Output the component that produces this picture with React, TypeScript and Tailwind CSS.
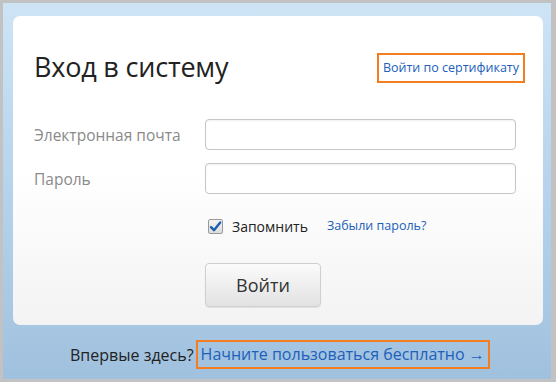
import React from "react";

function CheckMark() {
  return (
    <span className="flex h-[15px] w-[15px] items-center justify-center rounded-[2px] border border-[#9a9a9a] bg-gradient-to-b from-[#f4f4f4] to-[#dcdcdc]">
      <svg width="13" height="13" viewBox="0 0 13 13">
        <path d="M2 7.2 L5 10.2 L11.2 2.4" fill="none" stroke="#1f5fb0" strokeWidth="2.4" strokeLinecap="round" strokeLinejoin="round" />
      </svg>
    </span>
  );
}

export default function App() {
  const font = { fontFamily: '"Open Sans", "Noto Sans", sans-serif' };

  return (
    <div className="h-[385px] w-[556px] bg-white" style={font}>
      <div className="flex h-[382px] w-[556px] flex-col border-[3px] border-r-[5px] border-[#c2c2c2] bg-gradient-to-b from-[#cde4f5] via-[#b5d3ec] to-[#a0c1de] pl-[10px] pr-[8px] pt-[13px]">
        {/* card */}
        <div className="flex h-[309px] flex-col rounded-[7px] bg-gradient-to-b from-white via-white to-[#f3f3f3] px-[21px] pt-[32px]">
          <div className="flex items-center justify-between">
            <h1 className="text-[27px] leading-[38px] tracking-[-0.2px] text-[#222]">Вход в систему</h1>
            <a className="mr-[-3px] mt-[2px] border-2 border-[#f47d20] px-[4px] py-[4px] text-[12.5px] leading-[18px] text-[#2060bb]">
              Войти по сертификату
            </a>
          </div>

          <div className="mt-[33px] flex flex-col gap-[13px]">
            <div className="flex items-center">
              <span className="mt-[3px] w-[171px] text-[15.5px] text-[#8a8a8a]">Электронная почта</span>
              <div className="h-[31px] w-[311px] rounded-[4px] border border-[#c6c6c6] bg-white shadow-[inset_0_1px_2px_rgba(0,0,0,0.06)]" />
            </div>
            <div className="flex items-center">
              <span className="mt-[3px] w-[171px] text-[15.5px] text-[#8a8a8a]">Пароль</span>
              <div className="h-[31px] w-[311px] rounded-[4px] border border-[#c6c6c6] bg-white shadow-[inset_0_1px_2px_rgba(0,0,0,0.06)]" />
            </div>
          </div>

          <div className="mt-[22px] flex items-center pl-[174px]">
            <CheckMark />
            <span className="ml-[9px] text-[14px] text-[#222]">Запомнить</span>
            <a className="ml-[19px] text-[12.5px] text-[#2060bb]">Забыли пароль?</a>
          </div>

          <div className="mt-[26px] pl-[171px]">
            <button className="flex h-[44px] w-[116px] items-center justify-center rounded-[4px] border border-[#cfcfcf] bg-gradient-to-b from-[#fbfbfb] to-[#e2e2e2] text-[18px] text-[#333] shadow-[0_1px_1px_rgba(0,0,0,0.08)]">
              Войти
            </button>
          </div>
        </div>

        {/* footer */}
        <div className="mt-[15px] flex items-center pl-[57px]">
          <span className="mr-[2px] text-[16px] text-[#222]">Впервые здесь?</span>
          <a className="border-2 border-[#f47d20] px-[3px] text-[16px] leading-[25px] text-[#2060bb]">
            Начните пользоваться бесплатно →
          </a>
        </div>
      </div>
    </div>
  );
}
